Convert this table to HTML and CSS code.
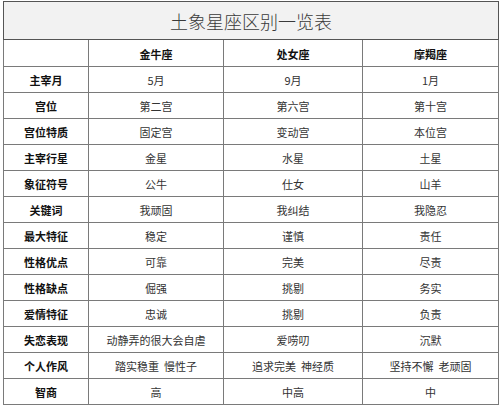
FILE: index.html
```html
<!DOCTYPE html>
<html lang="zh-CN">
<head>
<meta charset="utf-8">
<title>土象星座区别一览表</title>
<link rel="stylesheet" href="styles.css">
</head>
<body>
<div class="page">
<table class="zodiac">
  <colgroup>
    <col class="c-label">
    <col class="c-a">
    <col class="c-b">
    <col class="c-c">
  </colgroup>
  <thead>
    <tr class="title-row"><th colspan="4" class="title">土象星座区别一览表</th></tr>
    <tr class="head-row"><th></th><th>金牛座</th><th>处女座</th><th>摩羯座</th></tr>
  </thead>
  <tbody>
    <tr><th>主宰月</th><td>5月</td><td>9月</td><td>1月</td></tr>
    <tr><th>宫位</th><td>第二宫</td><td>第六宫</td><td>第十宫</td></tr>
    <tr><th>宫位特质</th><td>固定宫</td><td>变动宫</td><td>本位宫</td></tr>
    <tr><th>主宰行星</th><td>金星</td><td>水星</td><td>土星</td></tr>
    <tr><th>象征符号</th><td>公牛</td><td>仕女</td><td>山羊</td></tr>
    <tr><th>关键词</th><td>我顽固</td><td>我纠结</td><td>我隐忍</td></tr>
    <tr><th>最大特征</th><td>稳定</td><td>谨慎</td><td>责任</td></tr>
    <tr><th>性格优点</th><td>可靠</td><td>完美</td><td>尽责</td></tr>
    <tr><th>性格缺点</th><td>倔强</td><td>挑剔</td><td>务实</td></tr>
    <tr><th>爱情特征</th><td>忠诚</td><td>挑剔</td><td>负责</td></tr>
    <tr><th>失恋表现</th><td>动静弄的很大会自虐</td><td>爱唠叨</td><td>沉默</td></tr>
    <tr><th>个人作风</th><td>踏实稳重&nbsp;&nbsp;慢性子</td><td>追求完美&nbsp;&nbsp;神经质</td><td>坚持不懈&nbsp;&nbsp;老顽固</td></tr>
    <tr><th>智商</th><td>高</td><td>中高</td><td>中</td></tr>
  </tbody>
</table>
</div>
</body>
</html>
```

FILE: styles.css
```css
html, body {
  margin: 0;
  padding: 0;
  background: #ffffff;
}
.page {
  padding: 1px 0 0 3px;
}
.zodiac {
  width: 495px;
  table-layout: fixed;
  border-collapse: collapse;
  border: 1px solid #555555;
  font-family: "Noto Sans CJK SC", "Noto Sans", sans-serif;
  font-size: 11px;
  color: #333333;
}
.c-label { width: 85px; }
.c-a { width: 135px; }
.c-b { width: 139px; }
.c-c { width: 136px; }
.zodiac th,
.zodiac td {
  border: 1px solid #7a7a7a;
  text-align: center;
  vertical-align: middle;
  padding: 1px 0 0 0;
  height: 24px;
  line-height: 14px;
}
.zodiac th {
  font-weight: bold;
  color: #111111;
}
.title-row .title {
  height: 36px;
  background: #f2f2f2;
  font-size: 18px;
  font-weight: 300;
  color: #3a3a3a;
  line-height: 20px;
  border-color: #555555;
}
.head-row th {
  height: 25px;
  font-size: 11px;
}
```
